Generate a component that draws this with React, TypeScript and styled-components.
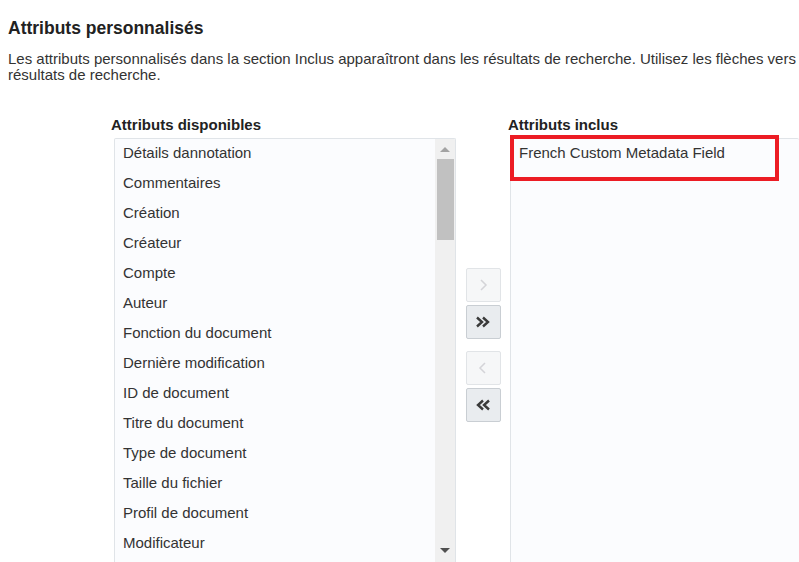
import React from 'react';
import styled, { createGlobalStyle } from 'styled-components';

const GlobalStyle = createGlobalStyle`
  html, body {
    margin: 0;
    padding: 0;
    background: #ffffff;
    overflow: hidden;
  }
  body {
    font-family: 'Liberation Sans', Arial, sans-serif;
    color: #333333;
  }
`;

const Page = styled.div`
  padding: 18px 0 0 8px;
`;

const Title = styled.h2`
  margin: 0;
  font-size: 17.5px;
  line-height: 20px;
  font-weight: 700;
  color: #222222;
`;

const Intro = styled.p`
  margin: 13px 0 0 0;
  font-size: 15px;
  line-height: 16px;
  color: #333333;
`;

const IntroLine = styled.span`
  display: block;
  white-space: nowrap;
`;

const Shuttle = styled.div`
  display: flex;
  margin-top: 34px;
  margin-left: 103px;
`;

const Column = styled.div<{ $width?: number }>`
  display: flex;
  flex-direction: column;
  width: ${p => (p.$width ? `${p.$width}px` : 'auto')};
  flex: ${p => (p.$width ? 'none' : '1')};
`;

const Label = styled.div<{ $shift?: number }>`
  font-size: 15px;
  font-weight: 700;
  line-height: 16px;
  color: #222222;
  height: 21px;
  margin-left: ${p => p.$shift ?? 0}px;
`;

const ListBox = styled.div<{ $open?: boolean }>`
  position: relative;
  display: flex;
  margin-left: ${p => (p.$open ? 0 : 3)}px;
  height: 424px;
  background: #fbfcfe;
  border: 1px solid #e0e4e8;
  border-right: ${p => (p.$open ? 'none' : '1px solid #e0e4e8')};
  border-bottom: none;
  border-radius: 2px 2px 0 0;
  box-sizing: border-box;
  overflow: ${p => (p.$open ? 'visible' : 'hidden')};
`;

const Items = styled.ul`
  list-style: none;
  margin: 0;
  padding: 0;
  flex: 1;
`;

const Item = styled.li`
  height: 30px;
  line-height: 27px;
  padding-left: 8px;
  font-size: 15px;
  color: #333333;
  white-space: nowrap;
`;

const ScrollTrack = styled.div`
  width: 20px;
  background: #f0f0f0;
  display: flex;
  flex-direction: column;
  align-items: center;
`;

const ScrollArrow = styled.div<{ $down?: boolean; $dim?: boolean }>`
  width: 0;
  height: 0;
  border-left: 5px solid transparent;
  border-right: 5px solid transparent;
  ${p =>
    p.$down
      ? `border-top: 5px solid ${p.$dim ? '#a3a3a3' : '#505050'};`
      : `border-bottom: 5px solid ${p.$dim ? '#a3a3a3' : '#505050'};`}
  margin: ${p => (p.$down ? 'auto 0 9px 0' : '8px 0 7px 0')};
`;

const ScrollThumb = styled.div`
  width: 17px;
  height: 81px;
  background: #c1c1c1;
`;

const Controls = styled.div`
  width: 54px;
  display: flex;
  flex-direction: column;
  align-items: center;
  padding-top: 151px;
`;

const ButtonGroup = styled.div`
  display: flex;
  flex-direction: column;
  gap: 3px;
  margin-bottom: 12px;
`;

const MoveButton = styled.button<{ $enabled?: boolean }>`
  width: 35px;
  height: 34px;
  padding: 0;
  display: flex;
  align-items: center;
  justify-content: center;
  border: 1px solid ${p => (p.$enabled ? '#c9ced3' : '#e1e4e7')};
  border-radius: 2px;
  background: ${p => (p.$enabled ? '#e9ecef' : '#f6f7f8')};
  color: ${p => (p.$enabled ? '#3a3a3a' : '#d4d4d8')};
  cursor: ${p => (p.$enabled ? 'pointer' : 'default')};
`;

const IncludedItem = styled.div`
  position: absolute;
  left: -1px;
  top: -4px;
  width: 269px;
  height: 46px;
  box-sizing: border-box;
  border: 4px solid #ec1c24;
  padding-left: 5px;
  font-size: 15px;
  line-height: 27px;
  color: #333333;
  white-space: nowrap;
`;

const Single = ({ dir }: { dir: 'right' | 'left' }) => (
  <svg width="10" height="14" viewBox="0 0 10 14">
    <path
      d={dir === 'right' ? 'M3 2 L8 7 L3 12' : 'M7 2 L2 7 L7 12'}
      fill="none"
      stroke="currentColor"
      strokeWidth="1.5"
    />
  </svg>
);

const Double = ({ dir }: { dir: 'right' | 'left' }) => (
  <svg width="16" height="14" viewBox="0 0 16 14">
    <path
      d={
        dir === 'right'
          ? 'M2 2.5 L7 7 L2 11.5 M8 2.5 L13 7 L8 11.5'
          : 'M14 2.5 L9 7 L14 11.5 M8 2.5 L3 7 L8 11.5'
      }
      fill="none"
      stroke="currentColor"
      strokeWidth="2.4"
    />
  </svg>
);

const available = [
  'Détails dannotation',
  'Commentaires',
  'Création',
  'Créateur',
  'Compte',
  'Auteur',
  'Fonction du document',
  'Dernière modification',
  'ID de document',
  'Titre du document',
  'Type de document',
  'Taille du fichier',
  'Profil de document',
  'Modificateur',
];

export default function App() {
  return (
    <>
      <GlobalStyle />
      <Page>
        <Title>Attributs personnalisés</Title>
        <Intro>
          <IntroLine>
            Les attributs personnalisés dans la section Inclus apparaîtront dans les résultats de recherche. Utilisez les flèches vers
          </IntroLine>
          <IntroLine>résultats de recherche.</IntroLine>
        </Intro>

        <Shuttle>
          <Column $width={345}>
            <Label>Attributs disponibles</Label>
            <ListBox>
              <Items>
                {available.map(name => (
                  <Item key={name}>{name}</Item>
                ))}
              </Items>
              <ScrollTrack>
                <ScrollArrow $dim />
                <ScrollThumb />
                <ScrollArrow $down />
              </ScrollTrack>
            </ListBox>
          </Column>

          <Controls>
            <ButtonGroup>
              <MoveButton disabled title="Déplacer">
                <Single dir="right" />
              </MoveButton>
              <MoveButton $enabled title="Tout déplacer">
                <Double dir="right" />
              </MoveButton>
            </ButtonGroup>
            <ButtonGroup>
              <MoveButton disabled title="Supprimer">
                <Single dir="left" />
              </MoveButton>
              <MoveButton $enabled title="Tout supprimer">
                <Double dir="left" />
              </MoveButton>
            </ButtonGroup>
          </Controls>

          <Column>
            <Label $shift={-2}>Attributs inclus</Label>
            <ListBox $open>
              <IncludedItem>French Custom Metadata Field</IncludedItem>
            </ListBox>
          </Column>
        </Shuttle>
      </Page>
    </>
  );
}
